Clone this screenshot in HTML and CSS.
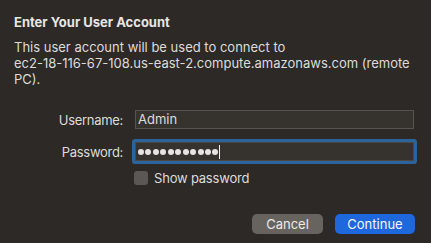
FILE: index.html
```html
<!DOCTYPE html>
<html>
<head>
<meta charset="utf-8">
<link rel="stylesheet" href="styles.css">
</head>
<body>
<div class="dialog">
  <h1 class="title">Enter Your User Account</h1>
  <p class="desc">This user account will be used to connect to<br>ec2-18-116-67-108.us-east-2.compute.amazonaws.com (remote<br>PC).</p>
  <div class="form">
    <label class="label">Username:</label>
    <div class="field">Admin</div>
    <label class="label">Password:</label>
    <div class="field focused">
      <span class="dots"><i></i><i></i><i></i><i></i><i></i><i></i><i></i><i></i><i></i><i></i><i></i></span><span class="caret"></span>
    </div>
    <span></span>
    <div class="check"><span class="box"></span><span class="check-label">Show password</span></div>
  </div>
  <div class="buttons">
    <button class="btn cancel">Cancel</button>
    <button class="btn primary">Continue</button>
  </div>
</div>
</body>
</html>
```
FILE: styles.css
```css
html, body {
  margin: 0;
  padding: 0;
  background: #2c2926;
  width: 431px;
  height: 243px;
  overflow: hidden;
}
.dialog {
  font-family: Inter, "Liberation Sans", sans-serif;
  color: #dedcda;
  font-size: 13px;
  padding: 14px 0 0 14px;
  box-sizing: border-box;
}
.title {
  margin: 0;
  font-size: 13px;
  line-height: 16px;
  font-weight: 700;
  color: #e8e6e4;
}
.desc {
  margin: 9px 0 0 0;
  line-height: 16px;
}
.form {
  margin: 23px 0 0 -14px;
  display: grid;
  grid-template-columns: 123px 279px;
  column-gap: 12px;
  row-gap: 13px;
  align-items: center;
}
.label {
  text-align: right;
  letter-spacing: -0.3px;
}
.field {
  height: 19px;
  box-sizing: border-box;
  border: 1px solid #57534f;
  background: #36332f;
  padding: 0 2px;
  line-height: 17px;
  display: flex;
  align-items: center;
}
.field.focused {
  border-color: #4a4744;
  box-shadow: 0 0 0 3px #2a649a;
  border-radius: 1px;
}
.dots {
  display: flex;
  gap: 1.45px;
}
.dots i {
  width: 6px;
  height: 6px;
  border-radius: 50%;
  background: #e6e4e2;
}
.caret {
  width: 1px;
  height: 14px;
  background: #f0f0f0;
  margin-left: 1px;
}
.check {
  display: flex;
  align-items: center;
  gap: 6px;
  margin-top: -4px;
  margin-left: -1px;
}
.check-label {
  letter-spacing: -0.2px;
}
.box {
  width: 14px;
  height: 14px;
  border-radius: 3px;
  background: #5a5754;
}
.buttons {
  display: flex;
  justify-content: flex-end;
  gap: 12px;
  margin-top: 28px;
  padding-right: 16px;
}
.btn {
  font-family: Inter, "Liberation Sans", sans-serif;
  font-size: 13px;
  height: 20px;
  border: none;
  border-radius: 5px;
  color: #eceae8;
  padding: 0;
}
.cancel {
  width: 71px;
  background: #67645f;
}
.primary {
  width: 80px;
  background: #1f67dd;
  color: #f4f6fa;
}
```
